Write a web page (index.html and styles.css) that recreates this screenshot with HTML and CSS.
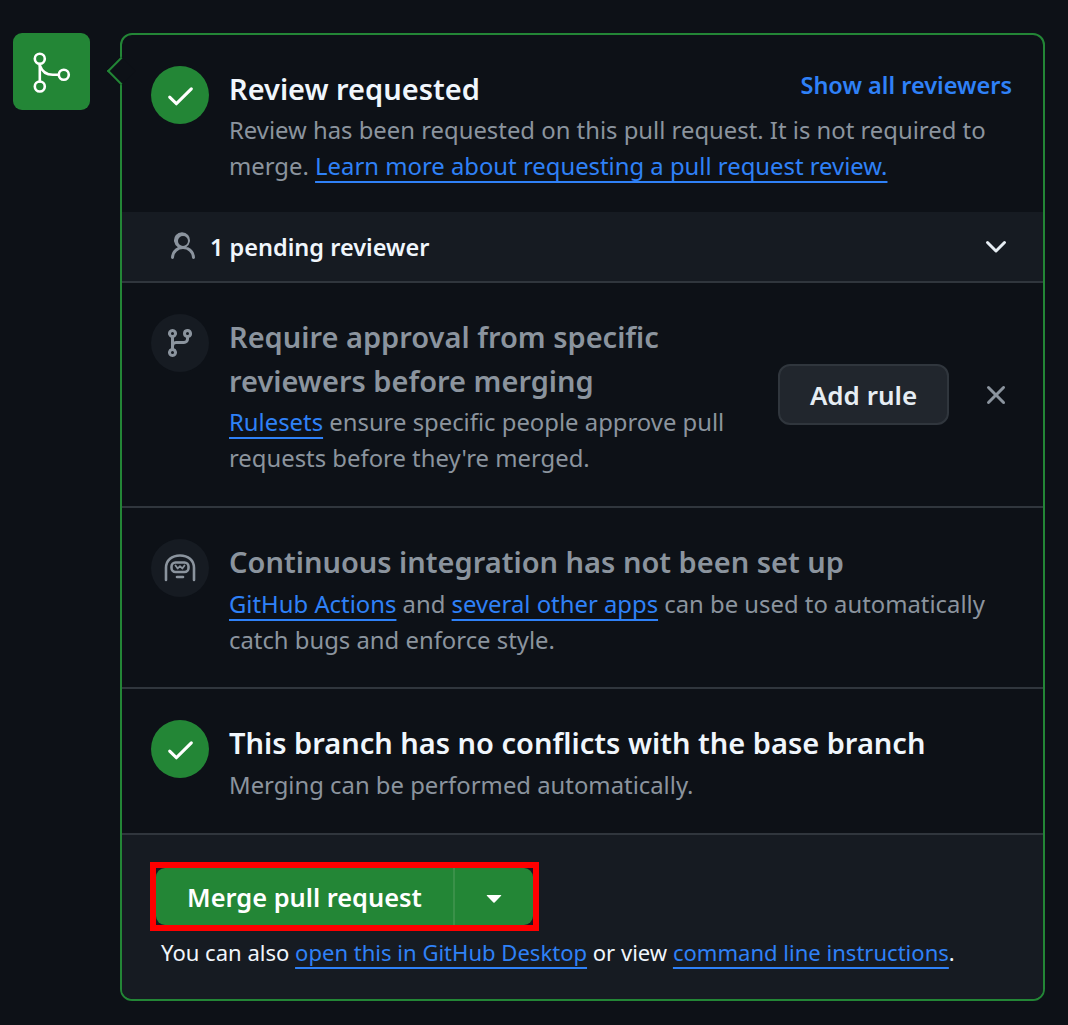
FILE: index.html
```html
<!DOCTYPE html>
<html>
<head>
    <title>Merge box</title>
    <meta charset="UTF-8">
    <link rel="stylesheet" href="styles.css">
</head>
<body>
    <div class="timeline">
        <div class="merge-badge">
            <svg width="46" height="46" viewBox="0 0 46 46" fill="none" stroke="#fff" stroke-width="2.6" stroke-linecap="round"><circle cx="10.8" cy="9.8" r="5"/><circle cx="34.8" cy="25.8" r="5"/><circle cx="10.8" cy="37.5" r="5"/><path d="M10.8 15v17.4"/><path d="M10.8 16.5c2 5.500 6 9.300 13 9.300h5.800"/></svg>
        </div>
        <div class="card">
            <div class="pointer"></div>

            <div class="section section-review">
                <div class="circle circle-green">
                    <svg width="33" height="33" viewBox="0 0 16 16" fill="#fff"><path d="M13.78 4.22a.75.75 0 0 1 0 1.06l-7.25 7.25a.75.75 0 0 1-1.06 0L2.22 9.28a.751.751 0 0 1 .018-1.042.751.751 0 0 1 1.042-.018L6 10.94l6.72-6.72a.75.75 0 0 1 1.06 0Z"/></svg>
                </div>
                <div class="text">
                    <div class="title-row">
                        <h3 class="title">Review requested</h3>
                        <a class="show-all">Show all reviewers</a>
                    </div>
                    <p class="desc">Review has been requested on this pull request. It is not required to merge. <a class="link">Learn more about requesting a pull request review.</a></p>
                </div>
            </div>

            <div class="pending-row">
                <svg width="32" height="32" viewBox="0 0 16 16" fill="#8b949e"><path d="M10.561 8.073a6.005 6.005 0 0 1 3.432 5.142.75.75 0 1 1-1.498.07 4.5 4.5 0 0 0-8.99 0 .75.75 0 0 1-1.498-.07 6.004 6.004 0 0 1 3.431-5.142 3.999 3.999 0 1 1 4.123 0ZM10.5 5a2.5 2.5 0 1 0-5 0 2.5 2.5 0 0 0 5 0Z"/></svg>
                <span class="pending-label">1 pending reviewer</span>
                <svg class="chevron" width="32" height="32" viewBox="0 0 16 16" fill="#e6edf3"><path d="M12.78 5.22a.749.749 0 0 1 0 1.06l-4.25 4.25a.749.749 0 0 1-1.06 0L3.22 6.28a.749.749 0 1 1 1.06-1.06L8 8.939l3.72-3.719a.749.749 0 0 1 1.06 0Z"/></svg>
            </div>

            <div class="section section-rule">
                <div class="circle circle-muted">
                    <svg width="32" height="32" viewBox="0 0 16 16" fill="#8b949e"><path d="M9.5 3.25a2.25 2.25 0 1 1 3 2.122V6A2.5 2.5 0 0 1 10 8.5H6a1 1 0 0 0-1 1v1.128a2.251 2.251 0 1 1-1.5 0V5.372a2.25 2.25 0 1 1 1.5 0v1.836A2.493 2.493 0 0 1 6 7h4a1 1 0 0 0 1-1v-.628A2.25 2.25 0 0 1 9.5 3.25Zm-6 0a.75.75 0 1 0 1.5 0 .75.75 0 0 0-1.5 0Zm8.25-.75a.75.75 0 1 0 0 1.5.75.75 0 0 0 0-1.5ZM4.25 12a.75.75 0 1 0 0 1.5.75.75 0 0 0 0-1.5Z"/></svg>
                </div>
                <div class="text">
                    <h3 class="title title-muted">Require approval from specific reviewers before merging</h3>
                    <p class="desc"><a class="link">Rulesets</a> ensure specific people approve pull requests before they're merged.</p>
                </div>
                <div class="rule-actions">
                    <button class="add-rule">Add rule</button>
                    <svg width="32" height="32" viewBox="0 0 16 16" fill="#8b949e"><path d="M3.72 3.72a.75.75 0 0 1 1.06 0L8 6.94l3.22-3.22a.749.749 0 0 1 1.275.326.749.749 0 0 1-.215.734L9.06 8l3.22 3.22a.749.749 0 0 1-.326 1.275.749.749 0 0 1-.734-.215L8 9.06l-3.22 3.22a.751.751 0 0 1-1.042-.018.751.751 0 0 1-.018-1.042L6.94 8 3.72 4.78a.75.75 0 0 1 0-1.06Z"/></svg>
                </div>
            </div>

            <div class="section section-ci">
                <div class="circle circle-muted">
                    <svg width="34" height="34" viewBox="0 0 34 34" fill="none" stroke="#8b949e" stroke-width="2.6" stroke-linecap="round" stroke-linejoin="round"><path d="M3 29V17C3 9 9 4.500 17 4.500S31 9 31 17V29"/><rect x="8.500" y="11.500" width="17" height="9.500" rx="4"/><path d="M12.500 14.500l2.200 3 2.300-2.400 2.300 2.400 2.200-3" stroke-width="1.800"/><path d="M14 26h6"/></svg>
                </div>
                <div class="text">
                    <h3 class="title title-muted">Continuous integration has not been set up</h3>
                    <p class="desc desc-low"><a class="link">GitHub Actions</a> and <a class="link">several other apps</a> can be used to automatically catch bugs and enforce style.</p>
                </div>
            </div>

            <div class="section section-conflicts">
                <div class="circle circle-green">
                    <svg width="33" height="33" viewBox="0 0 16 16" fill="#fff"><path d="M13.78 4.22a.75.75 0 0 1 0 1.06l-7.25 7.25a.75.75 0 0 1-1.06 0L2.22 9.28a.751.751 0 0 1 .018-1.042.751.751 0 0 1 1.042-.018L6 10.94l6.72-6.72a.75.75 0 0 1 1.06 0Z"/></svg>
                </div>
                <div class="text">
                    <h3 class="title">This branch has no conflicts with the base branch</h3>
                    <p class="desc desc-low">Merging can be performed automatically.</p>
                </div>
            </div>

            <div class="footer">
                <div class="highlight">
                    <button class="merge-btn">Merge pull request</button>
                    <button class="merge-caret">
                        <svg width="32" height="32" viewBox="0 0 16 16" fill="#fff"><path d="m4.427 7.427 3.396 3.396a.25.25 0 0 0 .354 0l3.396-3.396A.25.25 0 0 0 11.396 7H4.604a.25.25 0 0 0-.177.427Z"/></svg>
                    </button>
                </div>
                <p class="footer-note">You can also <a class="link">open this in GitHub Desktop</a> or view <a class="link">command line instructions</a>.</p>
            </div>
        </div>
    </div>
</body>
</html>
```

FILE: styles.css
```css
body {
    margin: 0;
    background-color: #0d1117;
    font-family: "Noto Sans", sans-serif;
    color: #e6edf3;
}
.timeline {
    display: flex;
    align-items: flex-start;
    gap: 30px;
    padding: 33px 0 0 13px;
}
.merge-badge {
    width: 77px;
    height: 77px;
    flex: none;
    display: flex;
    align-items: center;
    justify-content: center;
    background: #238636;
    border-radius: 9px;
}
.card {
    position: relative;
    width: 925px;
    height: 968px;
    box-sizing: border-box;
    border: 2px solid #238636;
    border-radius: 12px;
    display: flex;
    flex-direction: column;
}
.pointer {
    position: absolute;
    left: -11px;
    top: 26px;
    width: 20px;
    height: 20px;
    box-sizing: border-box;
    background: #0d1117;
    border-left: 2px solid #238636;
    border-bottom: 2px solid #238636;
    transform: rotate(45deg);
}
.section {
    display: flex;
    align-items: flex-start;
    gap: 20px;
    padding: 31px 31px 0 29px;
    box-sizing: border-box;
    border-bottom: 2px solid #30363d;
}
.section-review {
    height: 177px;
    border-bottom: none;
}
.section-rule {
    height: 225px;
}
.section-ci {
    height: 181px;
}
.section-conflicts {
    height: 146px;
}
.circle {
    width: 58px;
    height: 58px;
    flex: none;
    border-radius: 50%;
    display: flex;
    align-items: center;
    justify-content: center;
}
.circle-green {
    background: #238636;
}
.circle-muted {
    background: #161b22;
}
.text {
    flex: 1;
    margin-top: 1px;
}
.title-row {
    display: flex;
    justify-content: space-between;
}
.title {
    margin: 0;
    font-size: 29px;
    line-height: 44px;
    font-weight: 600;
    color: #f0f6fc;
}
.title-muted {
    color: #8b949e;
}
.show-all {
    font-size: 23.5px;
    line-height: 36px;
    font-weight: 600;
    color: #2f81f7;
}
.desc {
    margin: 1px 0 0;
    font-size: 23.85px;
    line-height: 36px;
    color: #8b949e;
}
.desc-low {
    margin-top: 2px;
}
.link {
    color: #2f81f7;
    text-decoration: underline;
    text-decoration-thickness: 2px;
    text-underline-offset: 6px;
}
.pending-row {
    height: 71px;
    box-sizing: border-box;
    flex: none;
    display: flex;
    align-items: center;
    gap: 11px;
    padding: 0 31px 0 45px;
    background: #161b22;
    border-bottom: 2px solid #30363d;
}
.pending-label {
    font-size: 23.5px;
    font-weight: 600;
    color: #f0f6fc;
}
.chevron {
    margin-left: auto;
}
.rule-actions {
    display: flex;
    align-items: center;
    gap: 31px;
    margin-top: 50px;
}
.add-rule {
    width: 171px;
    height: 61px;
    background: #21262d;
    border: 2px solid #30363d;
    border-radius: 12px;
    font-family: inherit;
    font-size: 26px;
    font-weight: 600;
    color: #e6edf3;
}
.footer {
    flex: 1;
    padding: 27px 28px 0;
    background: #161b22;
    border-radius: 0 0 10px 10px;
}
.highlight {
    display: inline-flex;
    border: 6px solid #ff0000;
}
.merge-btn, .merge-caret {
    height: 57px;
    background: #238636;
    border: none;
    color: #fff;
    font-family: inherit;
}
.merge-btn {
    width: 297px;
    font-size: 25.4px;
    font-weight: 600;
    border-radius: 9px 0 0 9px;
}
.merge-caret {
    width: 80px;
    padding: 0;
    display: flex;
    align-items: center;
    justify-content: center;
    border-left: 2px solid #3a9149;
    border-radius: 0 9px 9px 0;
}
.footer-note {
    margin: 3px 0 0 11px;
    font-size: 22.05px;
    line-height: 36px;
    color: #f0f6fc;
}
```
